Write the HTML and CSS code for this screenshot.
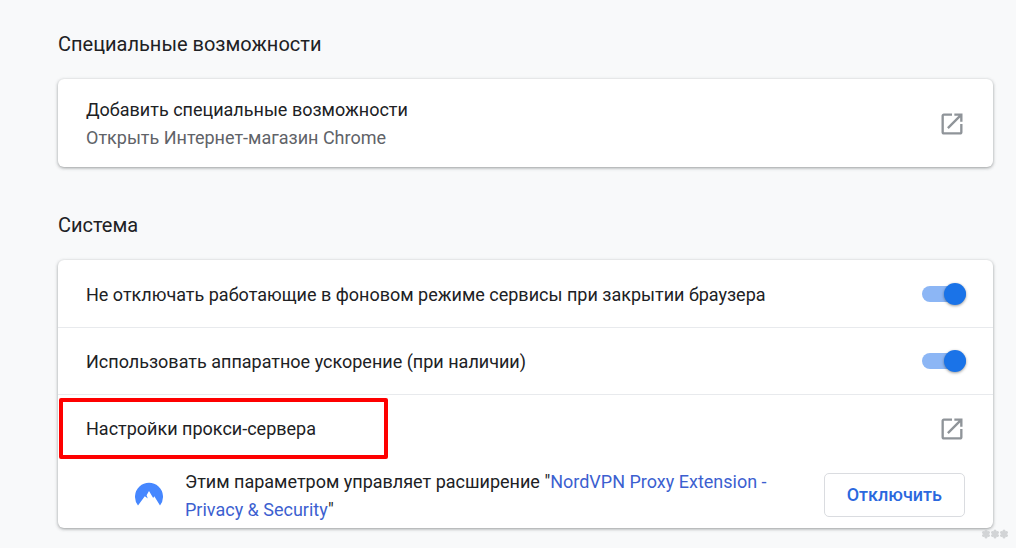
FILE: index.html
```html
<!doctype html>
<html lang="ru">
<head>
  <meta charset="UTF-8">
  <meta name="viewport" content="width=device-width, initial-scale=1.0">
  <title>Настройки</title>
  <link rel="stylesheet" href="styles.css">
</head>
<body>
  <main class="settings">
    <section class="section">
      <h2 class="section-title">Специальные возможности</h2>
      <div class="card">
        <div class="row row-tall">
          <div class="row-text">
            <div>Добавить специальные возможности</div>
            <div class="secondary">Открыть Интернет-магазин Chrome</div>
          </div>
          <button class="icon-btn" type="button" aria-label="Добавить специальные возможности">
            <svg viewBox="0 0 24 24"><path d="M19 19H5V5h7V3H5c-1.11 0-2 .9-2 2v14c0 1.1.89 2 2 2h14c1.1 0 2-.9 2-2v-7h-2v7zM14 3v2h3.59l-9.83 9.83 1.41 1.41L19 6.41V10h2V3h-7z"/></svg>
          </button>
        </div>
      </div>
    </section>

    <section class="section">
      <h2 class="section-title">Система</h2>
      <div class="card">
        <div class="row">
          <label class="row-text" for="background">Не отключать работающие в фоновом режиме сервисы при закрытии браузера</label>
          <input class="toggle" type="checkbox" id="background" checked>
        </div>
        <div class="row">
          <label class="row-text" for="hardware">Использовать аппаратное ускорение (при наличии)</label>
          <input class="toggle" type="checkbox" id="hardware" checked>
        </div>
        <div class="row row-proxy">
          <div class="row-text">Настройки прокси-сервера</div>
          <button class="icon-btn" type="button" aria-label="Настройки прокси-сервера">
            <svg viewBox="0 0 24 24"><path d="M19 19H5V5h7V3H5c-1.11 0-2 .9-2 2v14c0 1.1.89 2 2 2h14c1.1 0 2-.9 2-2v-7h-2v7zM14 3v2h3.59l-9.83 9.83 1.41 1.41L19 6.41V10h2V3h-7z"/></svg>
          </button>
          <div class="highlight"></div>
        </div>
        <div class="extension">
          <svg class="extension-icon" viewBox="0 0 28 28">
            <path fill="#4687ff" d="M3 24.500A14 14 0 1 1 25 24.500L19.300 15.200l-1.100 1.800-4.200-7-2.400 4.200 1.200 3.400-3-2.400z"/>
          </svg>
          <div class="extension-text">Этим параметром управляет расширение "<a href="#">NordVPN Proxy Extension - Privacy &amp; Security</a>"</div>
          <button class="btn" type="button">Отключить</button>
        </div>
      </div>
    </section>
  </main>

  <svg class="watermark" viewBox="0 0 28 10">
    <g stroke="#d2d4d6" stroke-width="3" stroke-linecap="round">
      <path d="M5 2v6M2.500 3.500l5 3M2.500 6.500l5-3"/>
      <path d="M14 2v6M11.500 3.500l5 3M11.500 6.500l5-3"/>
      <path d="M23 2v6M20.500 3.500l5 3M20.500 6.500l5-3"/>
    </g>
  </svg>
</body>
</html>
```
FILE: styles.css
```css
* {
    box-sizing: border-box;
}

body {
    margin: 0;
    background: #f8f9fa;
    color: #202124;
    font-family: Roboto, "Noto Sans", sans-serif;
    font-size: 18px;
    line-height: 28px;
}

.settings {
    padding: 28px 23px 20px 58px;
}

.section {
    margin-bottom: 42px;
}

.section:last-child {
    margin-bottom: 0;
}

.section-title {
    margin: 0 0 19px;
    font-size: 20px;
    font-weight: 400;
    line-height: 32px;
}

.card {
    background: #fff;
    border-radius: 6px;
    box-shadow: 0 1px 3px rgba(60, 64, 67, 0.4), 0 1px 4px rgba(60, 64, 67, 0.15);
}

.row {
    display: flex;
    align-items: center;
    min-height: 67px;
    padding: 0 27px 0 28px;
    border-top: 1px solid #e8eaed;
}

.row:first-child {
    border-top: none;
}

.row-tall {
    min-height: 88px;
}

.row-text {
    flex: 1;
    padding-top: 2px;
}

.row-proxy {
    position: relative;
}

.secondary {
    color: #5f6368;
}

.icon-btn {
    width: 28px;
    height: 30px;
    padding: 2px 0 0;
    border: none;
    background: none;
    cursor: pointer;
}

.icon-btn svg {
    display: block;
    fill: #8f9499;
}

.toggle {
    appearance: none;
    display: flex;
    align-items: center;
    justify-content: flex-end;
    width: 44px;
    height: 16px;
    margin: 0;
    border-radius: 8px;
    background: #8cb6f5;
    cursor: pointer;
}

.toggle::before {
    content: "";
    flex: none;
    width: 22px;
    height: 22px;
    border-radius: 50%;
    background: #1a73e8;
    box-shadow: 0 1px 3px rgba(0, 0, 0, 0.4);
}

.toggle:not(:checked) {
    justify-content: flex-start;
    background: #bdc1c6;
}

/* red frame drawn over the proxy row */
.highlight {
    position: absolute;
    top: 3px;
    left: 1px;
    width: 329px;
    height: 61px;
    border: 4px solid #fe0000;
    border-radius: 2px;
    pointer-events: none;
}

.extension {
    display: flex;
    align-items: center;
    min-height: 67px;
    padding: 0 28px 0 77px;
}

.extension-icon {
    flex: none;
    width: 28px;
    height: 28px;
    margin-right: 22px;
}

.extension-text {
    flex: 1;
    padding-top: 2px;
    margin-right: 48px;
}

.extension-text a {
    color: #3c5fd0;
    text-decoration: none;
}

.btn {
    height: 44px;
    padding: 0 22px;
    border: 1px solid #dadce0;
    border-radius: 5px;
    background: #fff;
    color: #2a68de;
    font-family: inherit;
    font-size: 18px;
    font-weight: 500;
    cursor: pointer;
}

.watermark {
    position: fixed;
    right: 7px;
    bottom: 9px;
    width: 28px;
    height: 10px;
}
```
